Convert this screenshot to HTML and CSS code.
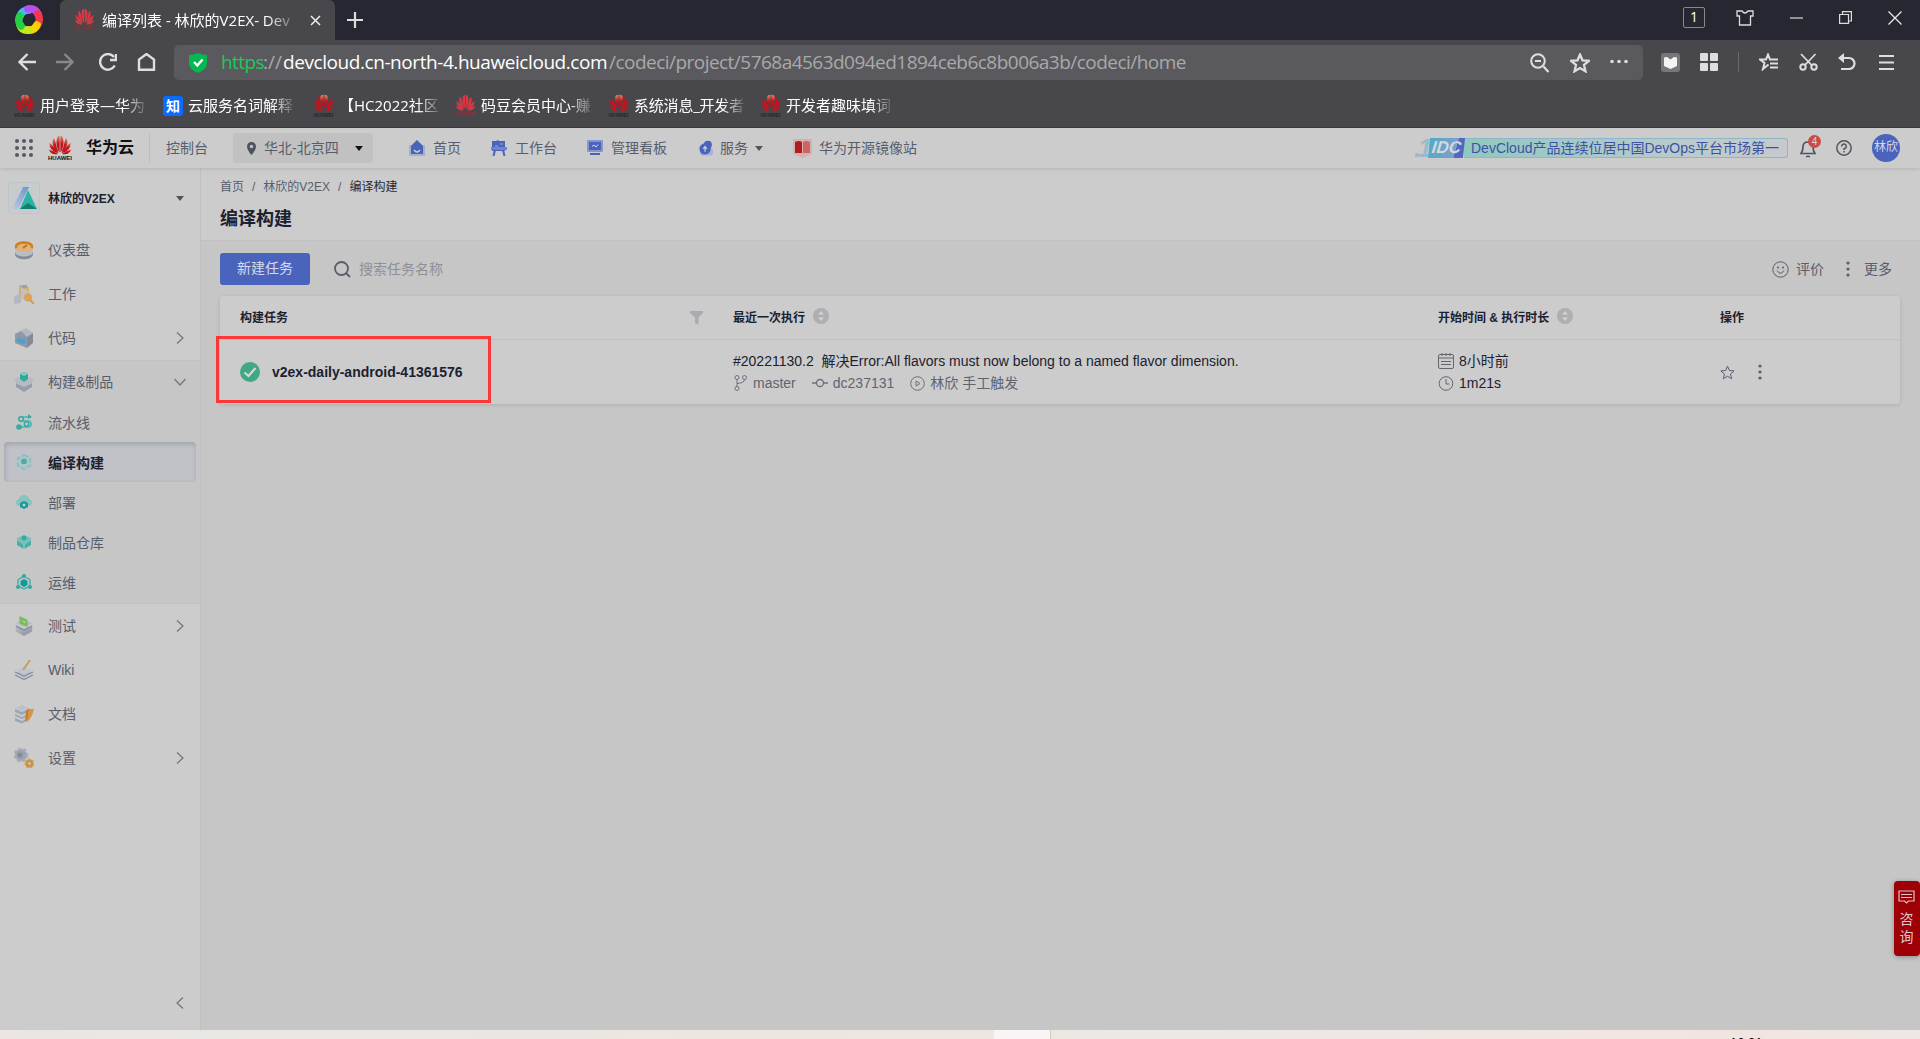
FILE: index.html
```
<!DOCTYPE html>
<html lang="zh-CN">
<head>
  <meta charset="utf-8">
  <title>编译列表 - 林欣的V2EX</title>
  <link rel="stylesheet" href="styles.css">
</head>
<body>
  <svg class="defs" width="0" height="0">
    <defs>
      <linearGradient id="red" x1="0" y1="0" x2="0" y2="1"><stop offset="0" stop-color="#d98a72"/><stop offset=".45" stop-color="#c41a1e"/><stop offset="1" stop-color="#b80a12"/></linearGradient>
      <linearGradient id="steel" x1="0" y1="0" x2="1" y2="1"><stop offset="0" stop-color="#b5bac4"/><stop offset="1" stop-color="#8a909d"/></linearGradient>
      <linearGradient id="slash" x1="1" y1="0" x2="0" y2="1"><stop offset="0" stop-color="#6d92cf"/><stop offset="1" stop-color="#bccbe0"/></linearGradient>
    </defs>
    <symbol id="flower" viewBox="0 0 24 20">
      <path d="M11.6 17.5C8 12 7.500 5 10 1.200Q11.700 0 11.700 3Z"/>
      <path d="M12.400 17.500C16 12 16.500 5 14 1.200Q12.300 0 12.300 3Z"/>
      <path d="M10.800 17.700C5 13 3.500 8 5.500 3.200Q7 3.500 7.500 7Q8.500 13 10.800 17.700Z"/>
      <path d="M13.200 17.700C19 13 20.500 8 18.500 3.200Q17 3.500 16.500 7Q15.500 13 13.200 17.700Z"/>
      <path d="M10.200 18.200C4 16.500 1 12.500 1.500 7.800Q6 11 10.200 18.200Z"/>
      <path d="M13.800 18.200C20 16.500 23 12.500 22.500 7.800Q18 11 13.800 18.200Z"/>
      <path d="M10 19Q3 20.500 .5 14.200Q5 15.500 10 19Z"/>
      <path d="M14 19Q21 20.500 23.500 14.200Q19 15.500 14 19Z"/>
    </symbol>
    <symbol id="tulip" viewBox="0 0 24 22">
      <path d="M11.500 1C6 1 6 7 9 12L11.500 17Z" fill="url(#red)"/>
      <path d="M12.500 1C18 1 18 7 15 12L12.500 17Z" fill="url(#red)"/>
      <path d="M6 2Q3 7 11 18Q2 16 0 8Q3 8 4.500 10Q3.500 4 6 2Z"/>
      <path d="M18 2Q21 7 13 18Q22 16 24 8Q21 8 19.500 10Q20.500 4 18 2Z"/>
      <path d="M1 15Q5 15 10.500 20Q3 22 1 15ZM23 15Q19 15 13.500 20Q21 22 23 15Z"/>
    </symbol>
    <symbol id="dots" viewBox="0 0 4 16"><circle cx="2" cy="2" r="1.600"/><circle cx="2" cy="8" r="1.600"/><circle cx="2" cy="14" r="1.600"/></symbol>
    <symbol id="sort" viewBox="0 0 16 16"><circle cx="8" cy="8" r="8" fill="#adafb2"/><path d="M8 3L11 6.500H5ZM8 13L5 9.500H11Z" fill="#d4d4d4"/></symbol>
    <symbol id="chev" viewBox="0 0 8 12"><path d="M1 .5L7 6L1 11.500" fill="none" stroke="#6f7481" stroke-width="1.200"/></symbol>
    <symbol id="star" viewBox="0 0 20 20"><path d="M10 1.500L12.500 7.300L18.800 7.900L14 12L15.500 18.300L10 15L4.500 18.300L6 12L1.200 7.900L7.500 7.300Z" fill="none" stroke="currentColor"/></symbol>
  </svg>

  <div class="browser">
    <div class="tabbar">
      <svg class="logo360" viewBox="0 0 30 32">
        <g fill="none" stroke-width="7.500" stroke-linecap="round">
          <path d="M6 12Q8 6 15 6" stroke="#44b8ff"/><path d="M14 5Q21 4 24 10" stroke="#b84df0"/>
          <path d="M24 10Q27 17 23 22" stroke="#f4384a"/><path d="M23 21Q20 27 14 26" stroke="#ffd000"/>
          <path d="M15 26Q8 27 6 21" stroke="#c9e61d"/><path d="M7 22Q3 17 6 12" stroke="#25cf45"/>
        </g>
      </svg>
      <div class="tab">
        <span class="fav"><svg width="21" height="17" fill="#d93843"><use href="#flower"/></svg><i class="c-red">HUAWEI</i></span>
        <span class="tab-title">编译列表 - 林欣的V2EX- Dev</span>
        <svg class="tab-x" width="11" height="11" viewBox="0 0 11 11"><path d="M1 1L10 10M10 1L1 10" stroke="#eee" stroke-width="1.500"/></svg>
      </div>
      <svg class="plus" width="16" height="16" viewBox="0 0 16 16"><path d="M8 0V16M0 8H16" stroke="#dcdcdc" stroke-width="2.200"/></svg>
      <div class="winbtns">
        <span class="count">1</span>
        <svg width="18" height="16" viewBox="0 0 18 16"><path d="M1 1H6Q9 5 12 1H17V6H14.500V15H3.500V6H1Z" fill="none" stroke="#ddd" stroke-width="1.300"/></svg>
        <svg width="13" height="13" viewBox="0 0 13 13"><path d="M0 7H13" stroke="#ddd" stroke-width="1.200"/></svg>
        <svg width="13" height="13" viewBox="0 0 13 13"><path d="M.6 3.500H9.500V12.400H.6ZM3.500 3.500V.6H12.400V10H9.500" fill="none" stroke="#ddd" stroke-width="1.200"/></svg>
        <svg width="14" height="14" viewBox="0 0 14 14"><path d="M.5 .5L13.500 13.500M13.500 .5L.5 13.500" stroke="#eee" stroke-width="1.200"/></svg>
      </div>
    </div>

    <div class="toolbar">
      <div class="navbtns">
        <svg width="18" height="18" viewBox="0 0 18 18"><path d="M9.500 1L1.500 9L9.500 17M1.500 9H18" stroke="#dedede"/></svg>
        <svg width="18" height="18" viewBox="0 0 18 18"><path d="M8.500 1L16.500 9L8.500 17M16.500 9H0" stroke="#88888b"/></svg>
        <svg width="18" height="18" viewBox="0 0 18 18"><path d="M15.800 12.500A7.800 7.800 0 1 1 15 4M17 1V7H11" stroke="#dedede"/></svg>
        <svg width="19" height="18" viewBox="0 0 19 18"><path d="M2 16.700H17V6.500L9.500 1L2 6.500Z" stroke="#dedede"/></svg>
      </div>
      <div class="urlbar">
        <svg class="shield" width="18" height="20" viewBox="0 0 18 20"><path d="M9 0Q13 2 18 2V11Q17 17 9 20Q1 17 0 11V2Q5 2 9 0Z" fill="#05b951"/><path d="M5 9L8.300 12.500L13.500 6.500" fill="none" stroke="#fff" stroke-width="2.400"/></svg>
        <div class="url"><span class="scheme">https</span><span class="slashes">://</span><span class="host">devcloud.cn-north-4.huaweicloud.com</span><span class="path">/codeci/project/5768a4563d094ed1894ceb6c8b006a3b/codeci/home</span></div>
        <div class="urltools">
          <svg width="20" height="20" viewBox="0 0 20 20"><path d="M13.500 13.500L18.500 19M5 8H11" stroke="#dedede" stroke-width="2.200"/><circle cx="8" cy="8" r="6.800" stroke="#dedede" stroke-width="2" fill="none"/></svg>
          <svg class="bold-star" width="20" height="20"><use href="#star"/></svg>
          <svg class="dots3" width="18" height="5" viewBox="0 0 18 5" fill="#dedede"><circle cx="2" cy="2.500" r="1.800"/><circle cx="9" cy="2.500" r="1.800"/><circle cx="16" cy="2.500" r="1.800"/></svg>
        </div>
      </div>
      <div class="exts">
        <svg width="19" height="19" viewBox="0 0 19 19"><rect width="19" height="19" rx="3" fill="#77777b"/><path d="M3 4.500L6 4L9.500 6.500L13 4L16 4.500V13L9.500 16L3 13Z" fill="#f3f3f3"/></svg>
        <svg width="18" height="18" viewBox="0 0 18 18" fill="#dedede"><rect width="8" height="8" rx="1"/><rect x="10" width="8" height="8" rx="1"/><rect y="10" width="8" height="8" rx="1"/><rect x="10" y="10" width="8" height="8" rx="1"/></svg>
        <span class="sep"></span>
        <svg width="20" height="18" viewBox="0 0 20 18"><path d="M9.500 11.500L4 16L5.500 10L1 6.500H7L9 1.500L11 6.500H19M11 10.500H19M11 14.500H19" fill="none" stroke="#dedede" stroke-width="2"/></svg>
        <svg width="19" height="18" viewBox="0 0 19 18"><path d="M2 1L12.500 12M16.500 1L6 12" stroke="#dedede" stroke-width="1.800"/><circle cx="4" cy="14" r="2.700" fill="none" stroke="#dedede" stroke-width="2"/><circle cx="15" cy="14" r="2.700" fill="none" stroke="#dedede" stroke-width="2"/></svg>
        <svg class="undo" width="18" height="18" viewBox="0 0 18 18"><path d="M2 5H11A5.500 5.500 0 0 1 11 16H3" fill="none" stroke="#dedede" stroke-width="2.200"/><path d="M0 5L6 0V10Z" fill="#dedede"/></svg>
        <svg width="15" height="17" viewBox="0 0 15 17"><path d="M0 2H15M0 8.500H15M0 15H15" stroke="#dedede" stroke-width="2.200"/></svg>
      </div>
    </div>

    <div class="bookmarks">
      <div class="bm bm1"><span class="fav"><svg width="20" height="18" fill="#cf0f1c"><use href="#tulip"/></svg><i>HUAWEI</i></span><span>用户登录—华为</span></div>
      <div class="bm bm2"><b class="zhi">知</b><span>云服务名词解释</span></div>
      <div class="bm bm3"><span class="fav"><svg width="20" height="18" fill="#cf0f1c"><use href="#tulip"/></svg><i>HUAWEI</i></span><span>【HC2022社区</span></div>
      <div class="bm bm4"><span class="fav"><svg width="21" height="17" fill="#d93843"><use href="#flower"/></svg><i class="c-red">HUAWEI</i></span><span>码豆会员中心-赚</span></div>
      <div class="bm bm5"><span class="fav"><svg width="20" height="18" fill="#cf0f1c"><use href="#tulip"/></svg><i>HUAWEI</i></span><span>系统消息_开发者</span></div>
      <div class="bm bm6"><span class="fav"><svg width="20" height="18" fill="#cf0f1c"><use href="#tulip"/></svg><i>HUAWEI</i></span><span>开发者趣味填词</span></div>
    </div>
  </div>

  <div class="page">
    <div class="header">
      <svg class="grid9" width="18" height="18" viewBox="0 0 18 18" fill="#555962"><circle cx="2" cy="2" r="2"/><circle cx="9" cy="2" r="2"/><circle cx="16" cy="2" r="2"/><circle cx="2" cy="9" r="2"/><circle cx="9" cy="9" r="2"/><circle cx="16" cy="9" r="2"/><circle cx="2" cy="16" r="2"/><circle cx="9" cy="16" r="2"/><circle cx="16" cy="16" r="2"/></svg>
      <div class="hw"><svg width="26" height="20" fill="url(#red)"><use href="#flower"/></svg><b>HUAWEI</b></div>
      <span class="brand">华为云</span>
      <span class="console">控制台</span>
      <div class="region">
        <svg width="9" height="13" viewBox="0 0 9 13"><path d="M4.500 0A4.500 4.500 0 0 0 0 4.500Q0 8 4.500 13Q9 8 9 4.500A4.500 4.500 0 0 0 4.500 0ZM4.500 2.700A1.800 1.800 0 1 1 4.500 6.300A1.800 1.800 0 1 1 4.500 2.700Z" fill="#4d525c"/></svg>
        <span>华北-北京四</span><i class="caret"></i>
      </div>
      <div class="topnav">
        <div class="n1"><svg width="16" height="16" viewBox="0 0 16 16"><path d="M8 0L13 5H16V16H0V5H3Z" fill="#a6afd0"/><path d="M8 0L14 6V14H2V6Z" fill="#4a63bd"/><path d="M5 10Q8 14 11 10" fill="none" stroke="#ccc" stroke-width="1.500"/></svg><span>首页</span></div>
        <div class="n2"><svg width="16" height="16" viewBox="0 0 16 16"><path d="M1 1H5L7 0L8 1H14V11H1Z" fill="#4a63bd"/><path d="M0 7H16V10H0Z" fill="#7084c6"/><path d="M4 10L2.500 16M12 10L13.500 16" stroke="#4a63bd" stroke-width="2"/><path d="M9 4H12M4 6H7" stroke="#a0acd6"/></svg><span>工作台</span></div>
        <div class="n3"><svg width="16" height="16" viewBox="0 0 16 16"><rect width="16" height="12" rx="1" fill="#8795cb"/><rect x="2" y="2" width="12" height="8" fill="#4a63bd"/><path d="M5 6.500L7 5L9 7L11 4.500" fill="none" stroke="#ddd"/><path d="M3 14H13" stroke="#4a63bd" stroke-width="2"/></svg><span>管理看板</span></div>
        <div class="n4"><svg width="15" height="16" viewBox="0 0 16 16"><rect x="2" y="8" width="14" height="8" rx="3" fill="#aab3d2"/><circle cx="10.500" cy="4.500" r="4.300" fill="#4a63bd"/><circle cx="7.500" cy="9" r="6" fill="#4a63bd"/><path d="M7.500 12V7M5.500 9L7.500 6.500L9.500 9" fill="none" stroke="#c8cde0" stroke-width="1.300"/></svg><span>服务</span><i class="caret"></i></div>
        <div class="n5"><svg width="19" height="19" viewBox="0 0 19 19"><path d="M0 0H19V15L9.500 19L0 15Z" fill="#d6b1b1"/><path d="M2 3Q6 1 9 3V14H2Z" fill="#b31c1c"/><path d="M10 3Q13 1 17 3V14H10Z" fill="#cc6664"/></svg><span>华为开源镜像站</span></div>
      </div>
      <div class="banner"><em class="one">.1</em><em class="idc">IDC</em><span>DevCloud产品连续位居中国DevOps平台市场第一</span></div>
      <div class="bell">
        <svg width="16" height="19" viewBox="0 0 16 19"><path d="M1 14.500Q3 12 3 8Q3 3 8 3Q13 3 13 8Q13 12 15 14.500ZM6 17.500H10" fill="none" stroke="#4f545f" stroke-width="1.700"/></svg>
        <span>4</span>
      </div>
      <svg class="help" width="16" height="16" viewBox="0 0 16 16" fill="none" stroke="#4f545f" stroke-width="1.500"><circle cx="8" cy="8" r="7.200"/><path d="M5.700 6.500A2.300 2.300 0 1 1 8 8.700V10M8 11V12.500"/></svg>
      <span class="avatar">林欣</span>
    </div>

    <div class="main">
      <div class="sidebar">
        <div class="project">
          <svg width="32" height="32" viewBox="0 0 32 32"><rect x=".5" y=".5" width="31" height="31" rx="3" fill="#c8cccd" stroke="#bcc5c7"/><path d="M8 8L16 3L24 8V24L16 29L8 24Z" fill="none" stroke="#bfc8ca"/><path d="M15 5H21L10 27H4Z" fill="url(#slash)"/><path d="M20 8L29 27H12Z" fill="#27b5a2"/><path d="M20 21L29 27H12Z" fill="#137e70"/></svg>
          <span>林欣的V2EX</span><i class="caret"></i>
        </div>
        <div class="item">
          <svg viewBox="0 0 20 20"><path d="M1 11V14C1 21 19 21 19 14V11Z" fill="#858b98"/><path d="M1 7V12C1 18 19 18 19 12V7Z" fill="#b9bdc5"/><ellipse cx="10" cy="6.500" rx="9" ry="5.500" fill="#e0b27a"/><path d="M2.500 8A8 4 0 1 1 17.500 8" fill="none" stroke="#d07c20" stroke-width="2.500"/><path d="M9 8L13 5" stroke="#c47316" stroke-width="2"/></svg>
          <span>仪表盘</span>
        </div>
        <div class="item">
          <svg viewBox="0 0 20 20"><path d="M5 1L15 3V16L5 14Z" fill="#d4ad76"/><path d="M7 4L14 6V15L7 14Z" fill="#bdc1ca"/><path d="M0 13L5 10L7 14V19L0 20Z" fill="#b0b8c8"/><circle cx="14" cy="13.500" r="4" fill="#d7a358"/><path d="M16 16L20 20" stroke="#d59d4a" stroke-width="2"/><path d="M8 1H13V4H8Z" fill="#9aa0ad"/></svg>
          <span>工作</span>
        </div>
        <div class="item">
          <svg viewBox="0 0 20 20"><path d="M1 6L12 0L19 5L13 9V20L1 15Z" fill="#b3b8c2"/><path d="M13 9L19 5V15L13 20Z" fill="#858b98"/><path d="M1 6L7 3L13 9V20L1 15Z" fill="#9299a6"/><path d="M2 13L5 9L8 12L11 9V16L6 15Z" fill="#4ba0cb"/></svg>
          <span>代码</span><svg class="chev"><use href="#chev"/></svg>
        </div>
        <div class="group">
          <div class="item">
            <svg viewBox="0 0 20 20"><path d="M2 9L10 13L18 9V15L10 20L2 15Z" fill="#979daa"/><path d="M0 8L5 5L10 9L15 5L20 8L17 12L10 15L3 12Z" fill="#b5bac4"/><path d="M6 2L10 0L14 2V7L10 10L6 7Z" fill="#2fa99c"/><path d="M6 2L10 4L14 2L10 0Z" fill="#87c9bf"/></svg>
            <span>构建&amp;制品</span><svg class="chev down"><use href="#chev"/></svg>
          </div>
          <div class="sub">
            <svg viewBox="0 0 16 16"><path d="M5 3H13M4 7H12Q15 7 15 10T12 13H4" fill="none" stroke="#4bb3ad" stroke-width="1.600"/><path d="M12 0L16 3L12 5Z" fill="#38aaa4"/><circle cx="5" cy="5" r="2.200" fill="#c6c6c6" stroke="#38aaa4" stroke-width="1.500"/><circle cx="10.500" cy="10" r="2.200" fill="#c6c6c6" stroke="#38aaa4" stroke-width="1.500"/><circle cx="3" cy="13" r="2.800" fill="#38aaa4"/></svg>
            <span>流水线</span>
          </div>
          <div class="sub active">
            <svg viewBox="0 0 16 16"><path d="M8 1L14 4.500V11.500L8 15L2 11.500V4.500Z" fill="none" stroke="#88c4bf" stroke-width="2.500" stroke-dasharray="5 1.500"/><circle cx="8" cy="7.500" r="3" fill="#4aada7"/><path d="M5 10H11L8 13Z" fill="#a5cbc8"/></svg>
            <span>编译构建</span>
          </div>
          <div class="sub">
            <svg viewBox="0 0 16 16"><path d="M3 12Q0 11 0 8.500Q0 6 3 5Q4 1 8 1Q12 1 13 5Q16 6 16 8.500Q16 11 13 12Z" fill="#86c4be"/><path d="M8 7L12 9V13L8 15L4 13V9Z" fill="#1499a0"/><circle cx="8" cy="11" r="1.500" fill="#c6c6c6"/></svg>
            <span>部署</span>
          </div>
          <div class="sub">
            <svg viewBox="0 0 16 16"><path d="M1 6L8 10L15 6V11L8 15L1 11Z" fill="#42aea8"/><path d="M1 4L8 1L15 4V7L8 11L1 7Z" fill="#79c0ba"/><circle cx="8" cy="4" r="2.500" fill="#36aaa4"/><path d="M8 10V15" stroke="#c6c6c6"/></svg>
            <span>制品仓库</span>
          </div>
          <div class="sub">
            <svg viewBox="0 0 16 16"><path d="M8 2L14 6V12L8 15L2 12V6Z" fill="none" stroke="#4ab0aa" stroke-width="1.500"/><circle cx="8" cy="2" r="2" fill="#36a8a3"/><circle cx="2" cy="13" r="2" fill="#36a8a3"/><circle cx="14" cy="13" r="2" fill="#36a8a3"/><path d="M8 5L11.500 7V11L8 13L4.500 11V7Z" fill="#109a9c"/></svg>
            <span>运维</span>
          </div>
        </div>
        <div class="item">
          <svg viewBox="1 0 18 22"><path d="M1 12L10 16L19 12V17L10 22L1 17Z" fill="url(#steel)"/><path d="M1 8L10 12.500L19 8L10 4Z" fill="#b7bbc4"/><path d="M1 11L10 15.500L19 11" fill="none" stroke="#8b919e" stroke-width="2"/><path d="M5 0L14 4V12L5 8Z" fill="#78bd59"/><path d="M8 5L10 7L12 6" fill="none" stroke="#c7d9be"/></svg>
          <span>测试</span><svg class="chev"><use href="#chev"/></svg>
        </div>
        <div class="item">
          <svg viewBox="0 0 20 20"><path d="M1 13L10 18L19 13L10 9Z" fill="#bcc0c9"/><path d="M1 12L10 16L19 12M1 15L10 19.500L19 15" fill="none" stroke="#858b98" stroke-width="1.300"/><path d="M2 10L10 6L18 10L10 15Z" fill="#c0c6d1"/><path d="M9 10L16 0" stroke="#d19b4b" stroke-width="1.800"/></svg>
          <span class="latin">Wiki</span>
        </div>
        <div class="item">
          <svg viewBox="0 0 20 20"><path d="M1 4L8 7L14 4L8 1Z" fill="#b9c1ce"/><path d="M1 5L8 8L14 5V8L8 11L1 8ZM1 10L8 13L14 10V12L8 15L1 12ZM1 14L8 17L14 14V16L8 19.500L1 17Z" fill="#9fa6b3"/><path d="M12 7L15 4L14 15L11 18Z" fill="#c97d28"/><path d="M15 5L20 5Q18 14 13 18Z" fill="#d49548"/></svg>
          <span>文档</span>
        </div>
        <div class="item">
          <svg viewBox="0 0 20 20"><circle cx="7" cy="7" r="6" fill="#9ca3b0" stroke="#a8aeb9" stroke-width="3" stroke-dasharray="3 2"/><circle cx="6" cy="7" r="2.500" fill="#858b98"/><circle cx="15.500" cy="15.500" r="4" fill="#d08a35" stroke="#d7a058" stroke-width="2" stroke-dasharray="2.500 1"/><circle cx="15.500" cy="15.500" r="1.700" fill="#c8bda9"/></svg>
          <span>设置</span><svg class="chev"><use href="#chev"/></svg>
        </div>
        <svg class="chev collapse"><use href="#chev"/></svg>
      </div>

      <div class="content">
        <div class="pagehead">
          <div class="crumbs"><span>首页</span><span>/</span><span>林欣的V2EX</span><span>/</span><span class="cur">编译构建</span></div>
          <div class="title">编译构建</div>
        </div>
        <div class="actions">
          <span class="btn">新建任务</span>
          <svg class="search" width="17" height="17" viewBox="0 0 17 17"><circle cx="7.500" cy="7.500" r="6.500" fill="none" stroke="#575d6c" stroke-width="1.800"/><path d="M12 12L16 16" stroke="#575d6c" stroke-width="1.800"/></svg>
          <span class="ph">搜索任务名称</span>
          <div class="right">
            <svg width="17" height="17" viewBox="0 0 17 17"><circle cx="8.500" cy="8.500" r="7.700" fill="none" stroke="#575d6c"/><path d="M5 9.500Q8.500 15 12 9.500" fill="none" stroke="#575d6c"/><circle cx="6" cy="6.500" r="1" fill="#575d6c"/><circle cx="11" cy="6.500" r="1" fill="#575d6c"/></svg>
            <span>评价</span>
            <svg class="more" width="4" height="16"><use href="#dots"/></svg>
            <span>更多</span>
          </div>
        </div>
        <div class="table">
          <div class="tr th">
            <div class="c1"><span>构建任务</span><svg class="filter" width="13" height="14" viewBox="0 0 13 14"><path d="M0 0H13V2L8.500 6.500V14L5 12V6.500L0 2Z" fill="#a9abb0"/></svg></div>
            <div class="c2"><span>最近一次执行</span><svg width="16" height="16"><use href="#sort"/></svg></div>
            <div class="c3"><span>开始时间 &amp; 执行时长</span><svg width="16" height="16"><use href="#sort"/></svg></div>
            <div class="c4"><span>操作</span></div>
          </div>
          <div class="tr td">
            <div class="c1 job">
              <svg width="20" height="20" viewBox="0 0 20 20"><circle cx="10" cy="10" r="10" fill="#40a884"/><path d="M4.500 10.500L8.500 14L15.500 6" fill="none" stroke="#d4d8d6" stroke-width="2.200"/></svg>
              <b>v2ex-daily-android-41361576</b>
            </div>
            <div class="c2">
              <div class="line"><span class="msg">#20221130.2&nbsp; 解决Error:All flavors must now belong to a named flavor dimension.</span></div>
              <div class="line meta">
                <svg width="13" height="16" viewBox="0 0 13 16" fill="none" stroke="#6b707c"><circle cx="3" cy="2.500" r="2"/><circle cx="3" cy="13.500" r="2"/><circle cx="10.500" cy="2.500" r="2"/><path d="M3 4.500V11.500M10.500 4.500Q10.500 8 3 8.500"/></svg><span class="m1">master</span>
                <svg width="16" height="10" viewBox="0 0 16 10" fill="none" stroke="#6b707c" stroke-width="1.300"><circle cx="8" cy="5" r="3.500"/><path d="M0 5H4.500M11.500 5H16"/></svg><span class="m2">dc237131</span>
                <svg width="15" height="15" viewBox="0 0 15 15" fill="none" stroke="#6b707c"><circle cx="7.500" cy="7.500" r="6.800"/><path d="M6 5V10L10 7.500Z"/></svg><span class="up">林欣 手工触发</span>
              </div>
            </div>
            <div class="c3">
              <div class="line"><svg width="16" height="16" viewBox="0 0 16 16" fill="none" stroke="#62676f"><rect x=".5" y="1.500" width="15" height="14" rx="1.500"/><path d="M.5 5H15.500M4 0V3M8 0V3M12 0V3M3 8.500H13M3 11.500H13"/></svg><span class="up">8小时前</span></div>
              <div class="line"><svg width="16" height="15" viewBox="0 0 16 15" fill="none" stroke="#62676f"><circle cx="8" cy="7.500" r="6.800"/><path d="M8 3V8H11.500"/></svg><span>1m21s</span></div>
            </div>
            <div class="c4"><svg class="thin-star" width="15" height="15"><use href="#star"/></svg><svg class="more" width="4" height="16"><use href="#dots"/></svg></div>
          </div>
          <div class="mark"></div>
        </div>
      </div>
    </div>
    <div class="consult">
      <svg width="17" height="14" viewBox="0 0 17 14" fill="none" stroke="#d8c6c6" stroke-width="1.200"><path d="M1 1H16V11H10.500L8.500 13L6.500 11H1ZM3 4.500H14M3 7.500H14"/></svg>
      <span>咨</span><span>询</span>
    </div>
  </div>
  <div class="taskbar"><span class="task"></span><span class="clock">16:31</span></div>
</body>
</html>
```
FILE: styles.css
```
body {
  margin: 0;
  width: 1920px;
  height: 1039px;
  overflow: hidden;
  font-family: "Liberation Sans", "Noto Sans CJK SC", sans-serif;
  font-size: 14px;
  color: #575d6c;
  background: #c6c6c6;
}
* {
  box-sizing: border-box;
}
svg {
  flex: none;
  display: block;
}
.defs {
  position: absolute;
}
span, b, em {
  white-space: nowrap;
}
.caret {
  border: 4px solid transparent;
  border-top: 5px solid #4f545f;
  border-bottom: 0;
}

/* browser */
.browser {
  height: 128px;
  background: #48474b;
  border-bottom: 1px solid #3c383d;
  font-family: "Open Sans", "Noto Sans CJK SC", sans-serif;
  color: #fff;
}
.tabbar {
  display: flex;
  align-items: center;
  height: 40px;
  background: #272731;
}
.logo360 {
  width: 30px;
  height: 32px;
  margin-left: 14px;
}
.tab {
  display: flex;
  align-items: center;
  width: 275px;
  height: 40px;
  margin-left: 16px;
  padding-left: 14px;
  background: #48474b;
  border-radius: 6px 6px 0 0;
}
.fav {
  flex: none;
  display: flex;
  flex-direction: column;
  align-items: center;
  width: 21px;
  height: 25px;
}
.fav i {
  font: bold 5px/6px "Liberation Sans", sans-serif;
  color: #2a2528;
}
.fav .c-red {
  color: #8a3039;
}
.tab-title {
  width: 197px;
  margin-left: 7px;
  padding-bottom: 2px;
  font-size: 15px;
  -webkit-mask-image: linear-gradient(90deg, #000 84%, transparent);
}
.tab-x {
  margin-left: 11px;
}
.plus {
  margin-left: 12px;
}
.winbtns {
  display: flex;
  align-items: center;
  margin: -5px 18px 0 auto;
}
.winbtns svg {
  margin-left: 36px;
}
.winbtns .count + svg {
  margin-left: 31px;
}
.count {
  width: 22px;
  height: 21px;
  border: 1px solid #888;
  border-radius: 2px;
  font-size: 14px;
  line-height: 18px;
  text-align: center;
}
.toolbar {
  display: flex;
  align-items: center;
  height: 45px;
}
.navbtns {
  display: flex;
  width: 174px;
  padding: 0 0 1px 18px;
}
.navbtns svg {
  margin-right: 20px;
  fill: none;
  stroke-width: 2.4;
}
.navbtns svg:nth-child(2) {
  margin-right: 25px;
}
.urlbar {
  display: flex;
  align-items: center;
  width: 1469px;
  height: 35px;
  padding: 0 15px;
  background: #5a595d;
  border-radius: 5px;
}
.url {
  display: flex;
  margin-left: 14px;
  padding-bottom: 1px;
  font-size: 19px;
  color: #a9a9ab;
}
.scheme {
  width: 42px;
  color: #20c95c;
  letter-spacing: -0.6px;
}
.slashes {
  width: 20px;
}
.host {
  width: 326px;
  color: #fff;
  letter-spacing: -0.43px;
}
.path {
  letter-spacing: -0.53px;
}
.urltools {
  display: flex;
  align-items: center;
  gap: 20px;
  margin-left: auto;
}
.dots3 {
  margin-bottom: 3px;
}
.bold-star {
  color: #dedede;
  stroke-width: 2.3;
}
.exts {
  display: flex;
  align-items: center;
  gap: 20px;
  padding: 0 0 1px 18px;
}
.undo {
  margin-right: 3px;
}
.sep {
  width: 1px;
  height: 20px;
  background: #69686c;
}
.bookmarks {
  display: flex;
  align-items: center;
  height: 41px;
  padding-left: 14px;
}
.bm {
  display: flex;
  align-items: center;
  flex: none;
}
.bm .fav {
  margin-top: 2px;
}
.bm > span:last-child {
  margin-left: 5px;
  padding-bottom: 1px;
  font-size: 15px;
  line-height: 24px;
  -webkit-mask-image: linear-gradient(90deg, #000 80%, rgba(0, 0, 0, .15));
}
.bm1 { width: 149px; }
.bm2 { width: 150px; }
.bm3 { width: 142px; }
.bm4 { width: 153px; }
.bm5 { width: 152px; }
.bm5 > span:last-child {
  letter-spacing: -0.2px;
}
.zhi {
  width: 20px;
  height: 20px;
  border-radius: 3px;
  background: #0a6cff;
  font-size: 14px;
  line-height: 19px;
  text-align: center;
}

/* page header */
.page {
  height: 902px;
  background: #c6c6c6;
  position: relative;
}
.header {
  position: relative;
  display: flex;
  align-items: center;
  height: 40px;
  background: #cccccc;
  box-shadow: 0 1px 4px rgba(0, 0, 0, .12);
}
.console, .region span, .topnav span {
  padding-bottom: 2px;
}
.grid9 {
  margin-left: 15px;
}
.hw {
  width: 26px;
  margin-left: 14px;
}
.hw b {
  display: block;
  font-size: 6px;
  line-height: 7px;
  color: #111;
  text-align: center;
}
.brand {
  width: 64px;
  margin-left: 13px;
  border-right: 1px solid #bdbdbd;
  font-size: 16px;
  font-weight: bold;
  line-height: 28px;
  color: #111;
}
.console {
  width: 67px;
  margin-left: 16px;
}
.region {
  display: flex;
  align-items: center;
  width: 140px;
  height: 30px;
  padding-left: 14px;
  background: #c1c1c1;
  border-radius: 4px;
}
.region span {
  margin: 0 16px 0 8px;
}
.region .caret {
  border-top-color: #111;
}
.topnav {
  display: flex;
  margin-left: 36px;
}
.topnav div {
  display: flex;
  align-items: center;
  gap: 8px;
}
.topnav .n4, .topnav .n5 {
  gap: 7px;
}
.n1 { width: 82px; }
.n2 { width: 96px; }
.n3 { width: 111px; }
.n4 { width: 95px; }
.banner {
  display: flex;
  align-items: center;
  width: 374px;
  margin-left: auto;
}
.banner .one {
  width: 15px;
  font-size: 25px;
  font-weight: bold;
  line-height: 20px;
  color: #9db9cc;
  letter-spacing: -3px;
}
.idc {
  width: 35px;
  height: 20px;
  background: linear-gradient(100deg, #52aac8, #7f9fcb 75%, #5367c2 76%);
  color: #d2dadd;
  font-size: 17px;
  font-weight: bold;
  line-height: 20px;
  text-align: center;
  transform: skewX(-6deg);
}
.banner span {
  flex: 1;
  height: 20px;
  padding-left: 7px;
  border: 1px solid #8fb5c8;
  border-left: 0;
  border-radius: 0 3px 3px 0;
  background: linear-gradient(90deg, #8fc8c0, #bccacb 70%, #c6c9cd);
  color: #3d52a5;
  line-height: 18px;
}
.bell {
  position: relative;
  margin-left: 12px;
}
.bell span {
  position: absolute;
  top: -4px;
  left: 8px;
  width: 13px;
  height: 13px;
  border-radius: 50%;
  background: #cc4b48;
  color: #e6d2d2;
  font-size: 10px;
  line-height: 13px;
  text-align: center;
}
.help {
  margin-left: 20px;
}
.avatar {
  width: 28px;
  height: 28px;
  margin: 0 20px;
  border-radius: 50%;
  background: #4a63bd;
  color: #d8dbe6;
  font-size: 12px;
  line-height: 27px;
  text-align: center;
}

/* sidebar */
.main {
  display: flex;
  height: 862px;
}
.sidebar {
  display: flex;
  flex-direction: column;
  width: 201px;
  background: #cccccc;
  border-right: 1px solid #c0c0c0;
}
.project {
  display: flex;
  align-items: center;
  height: 60px;
  padding: 0 16px 0 8px;
  color: #1c2130;
  font-weight: bold;
}
.project span {
  flex: 1;
  margin-left: 8px;
  padding-bottom: 2px;
  font-size: 12px;
}
.item {
  display: flex;
  align-items: center;
  height: 44px;
  padding: 0 16px 0 14px;
}
.item svg:first-child {
  width: 20px;
  height: 20px;
}
.item span {
  flex: 1;
  margin-left: 14px;
  padding-bottom: 2px;
}
.item .latin {
  padding-bottom: 0;
}
.item .chev, .collapse {
  width: 8px;
  height: 12px;
}
.item .down {
  transform: rotate(90deg);
}
.group {
  height: 244px;
  background: #c6c6c6;
  border-top: 1px solid #c1c1c1;
  border-bottom: 1px solid #c1c1c1;
}
.group .item {
  height: 41px;
}
.sub {
  display: flex;
  align-items: center;
  height: 40px;
  padding-left: 16px;
}
.sub svg {
  width: 16px;
  height: 16px;
}
.sub span {
  margin-left: 16px;
  padding-bottom: 1px;
}
.sub.active {
  margin: 0 4px;
  padding-left: 12px;
  background: #c1c2c8;
  border-radius: 4px;
  box-shadow: inset 1px 2px 5px rgba(80, 90, 110, .3);
  color: #1c2130;
  font-weight: bold;
}
.collapse {
  margin: auto 16px 21px auto;
  transform: rotate(180deg);
}

/* content */
.content {
  flex: 1;
}
.pagehead {
  height: 73px;
  padding: 10px 0 0 19px;
  background: #cccccc;
  border-bottom: 1px solid #c1c1c1;
}
.crumbs {
  display: flex;
  gap: 8px;
  font-size: 12px;
  line-height: 18px;
}
.crumbs .cur {
  color: #252b3a;
}
.title {
  margin-top: 10px;
  font-size: 18px;
  font-weight: bold;
  line-height: 26px;
  color: #1c2130;
}
.actions {
  display: flex;
  align-items: center;
  height: 32px;
  margin: 12px 28px 11px 19px;
}
.btn {
  width: 90px;
  height: 32px;
  border-radius: 3px;
  background: #4a63bd;
  color: #d6dae8;
  line-height: 31px;
  text-align: center;
}
.search {
  margin-left: 24px;
}
.ph {
  margin-left: 8px;
  padding-bottom: 2px;
  color: #8d9096;
}
.right {
  display: flex;
  align-items: center;
  margin-left: auto;
}
.right span {
  margin-left: 7px;
  padding-bottom: 2px;
}
.more {
  fill: #575d6c;
}
.right .more {
  margin: 0 5px 0 22px;
}
.right .more + span {
  margin-left: 9px;
}
.table {
  position: relative;
  width: 1680px;
  height: 108px;
  margin-left: 19px;
  border-radius: 4px;
  background: #cccccc;
  box-shadow: 0 1px 4px rgba(0, 0, 0, .12);
}
.tr {
  display: flex;
  align-items: center;
  padding-left: 20px;
}
.c1 { width: 493px; }
.c2 { width: 705px; }
.c3 { width: 282px; }
.th {
  height: 44px;
  border-bottom: 1px solid #c1c1c1;
  color: #1c2130;
  font-size: 12px;
  font-weight: bold;
}
.th div, .job, .line, .td .c4 {
  display: flex;
  align-items: center;
}
.th span {
  padding-bottom: 2px;
}
.th svg {
  margin: -3px 0 0 8px;
}
.th .filter {
  margin: 0 30px 0 auto;
}
.td {
  height: 64px;
  color: #1c2130;
}
.job b {
  margin-left: 12px;
}
.line {
  height: 22px;
}
.line span {
  margin-left: 5px;
}
.line .msg {
  margin-left: 0;
  padding-bottom: 2px;
}
.line .up {
  padding-bottom: 2px;
}
.meta {
  padding-left: 1px;
  color: #5f6471;
}
.meta .m1 {
  margin: 0 16px 0 6px;
}
.meta .m2 {
  margin-right: 16px;
}
.thin-star {
  margin-right: 23px;
  color: #575d6c;
  stroke-width: 1.3;
}
.mark {
  position: absolute;
  left: -4px;
  top: 40px;
  width: 275px;
  height: 67px;
  border: 3px solid #fc3737;
}
.consult {
  position: absolute;
  right: 0;
  top: 753px;
  display: flex;
  flex-direction: column;
  align-items: center;
  width: 26px;
  height: 75px;
  padding: 9px 1px 0 0;
  border-radius: 4px;
  background: #9e0008;
  box-shadow: 0 1px 5px rgba(0, 0, 0, .3);
  color: #dccaca;
  line-height: 18px;
}
.consult svg {
  margin-bottom: 6px;
}

/* strip of the desktop taskbar */
.taskbar {
  display: flex;
  height: 9px;
  overflow: hidden;
  background: linear-gradient(90deg, #ece5e1, #e9e7e5 10%, #ede5df 40%, #ede8e4 60%, #f1e5e1 90%, #eee7e3);
}
.task {
  width: 57px;
  margin-left: 994px;
  background: #f8f5f4;
  border-right: 1px solid #cfc8c4;
}
.clock {
  margin: 7px 0 0 679px;
  font-size: 13px;
  line-height: 12px;
  color: #000;
}
```
